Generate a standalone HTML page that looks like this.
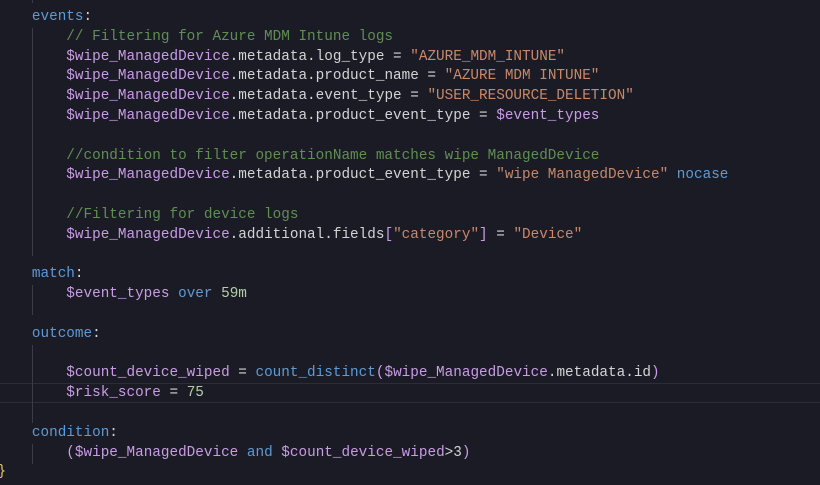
<!DOCTYPE html>
<html><head><meta charset="utf-8"><style>
html,body{margin:0;padding:0;width:820px;height:485px;overflow:hidden;background:#1b1b26;}
#c{position:absolute;left:-2.5px;top:8px;font-family:"Liberation Mono",monospace;font-size:14.33px;line-height:19.8px;color:#d4d4d4;white-space:pre;}
.k{color:#5d9bd6}.v{color:#c99ce6}.s{color:#c8896a}.c{color:#5f8f52}.n{color:#b5cea8}.y{color:#e8c35a}
.g{position:absolute;width:1px;background:#3a3b46}
.hl{position:absolute;left:0;width:820px;top:383px;height:20px;border-top:1px solid #2c2d38;border-bottom:1px solid #2c2d38;box-sizing:border-box}
</style></head><body>
<div class="hl"></div>
<div class="g" style="left:32px;top:0;height:3px"></div>
<div class="g" style="left:32px;top:28px;height:228px"></div>
<div class="g" style="left:32px;top:285px;height:30px"></div>
<div class="g" style="left:32px;top:345px;height:78px"></div>
<div class="g" style="left:32px;top:444px;height:20px"></div>
<div id="c">    <span class="k">events</span>:
        <span class="c">// Filtering for Azure MDM Intune logs</span>
        <span class="v">$wipe_ManagedDevice</span>.metadata.log_type = <span class="s">"AZURE_MDM_INTUNE"</span>
        <span class="v">$wipe_ManagedDevice</span>.metadata.product_name = <span class="s">"AZURE MDM INTUNE"</span>
        <span class="v">$wipe_ManagedDevice</span>.metadata.event_type = <span class="s">"USER_RESOURCE_DELETION"</span>
        <span class="v">$wipe_ManagedDevice</span>.metadata.product_event_type = <span class="v">$event_types</span>

        <span class="c">//condition to filter operationName matches wipe ManagedDevice</span>
        <span class="v">$wipe_ManagedDevice</span>.metadata.product_event_type = <span class="s">"wipe ManagedDevice"</span> <span class="k">nocase</span>

        <span class="c">//Filtering for device logs</span>
        <span class="v">$wipe_ManagedDevice</span>.additional.fields<span class="v">[</span><span class="s">"category"</span><span class="v">]</span> = <span class="s">"Device"</span>

    <span class="k">match</span>:
        <span class="v">$event_types</span> <span class="k">over</span> <span class="n">59m</span>

    <span class="k">outcome</span>:

        <span class="v">$count_device_wiped</span> = <span class="k">count_distinct</span><span class="v">(</span><span class="v">$wipe_ManagedDevice</span>.metadata.id<span class="v">)</span>
        <span class="v">$risk_score</span> = <span class="n">75</span>

    <span class="k">condition</span>:
        <span class="v">(</span><span class="v">$wipe_ManagedDevice</span> <span class="k">and</span> <span class="v">$count_device_wiped</span>&gt;3<span class="v">)</span>
<span class="y">}</span></div>
</body></html>
